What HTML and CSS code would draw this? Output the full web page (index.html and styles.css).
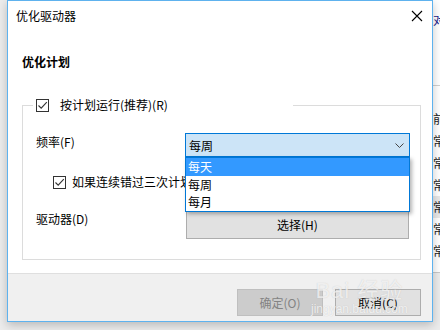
FILE: index.html
```html
<!DOCTYPE html>
<html lang="zh-CN">
  <head>
    <meta charset="UTF-8" />
    <title>优化驱动器</title>
    <link rel="stylesheet" href="styles.css">
  </head>
  <body>
    <div class="desk">
      <div class="dialog">
        <div class="titlebar">
          <span class="title">优化驱动器</span>
          <svg class="close" width="12" height="12" viewBox="0 0 12 12">
            <path d="M1 1L11 11M11 1L1 11" stroke="#000" stroke-width="1.1" fill="none" />
          </svg>
        </div>
        <div class="content">
          <h2 class="heading">优化计划</h2>
          <fieldset class="group">
            <legend class="legend">
              <span class="check">
                <svg width="11" height="11" viewBox="0 0 11 11"><path d="M1.5 5.5L4.2 8.2L9.8 2.2" stroke="#333" stroke-width="1.1" fill="none" /></svg>
              </span>
              <span>按计划运行(推荐)(R)</span>
            </legend>
            <div class="row freq">
              <span class="label">频率(F)</span>
              <div class="select">
                <span>每周</span>
                <svg class="chevron" width="9" height="5" viewBox="0 0 9 5"><path d="M0.5 0.5L4.5 4.5L8.5 0.5" stroke="#444" stroke-width="1" fill="none" /></svg>
                <ul class="options">
                  <li class="on">每天</li>
                  <li>每周</li>
                  <li>每月</li>
                </ul>
              </div>
            </div>
            <div class="row miss">
              <span class="check">
                <svg width="11" height="11" viewBox="0 0 11 11"><path d="M1.5 5.5L4.2 8.2L9.8 2.2" stroke="#333" stroke-width="1.1" fill="none" /></svg>
              </span>
              <span>如果连续错过三次计划运行，则增加优先级</span>
            </div>
            <div class="row drive">
              <span class="label">驱动器(D)</span>
              <button class="btn choose">选择(H)</button>
            </div>
          </fieldset>
        </div>
        <div class="footer">
          <button class="btn off">确定(O)</button>
          <button class="btn">取消(C)</button>
        </div>
        <div class="watermark">
          <span class="wm-logo">Bai 经验</span>
          <span class="wm-url">jingyan.baidu.com</span>
        </div>
      </div>
      <div class="behind">
        <div class="bh-head">对</div>
        <div class="bh-row first">前</div>
        <div class="bh-row">常</div>
        <div class="bh-row">常</div>
        <div class="bh-row">常</div>
        <div class="bh-row alt">常</div>
        <div class="bh-row">常</div>
        <div class="bh-row">常</div>
      </div>
    </div>
  </body>
</html>
```

FILE: styles.css
```css
* {
  box-sizing: border-box;
}
body {
  margin: 0;
  width: 440px;
  height: 330px;
  overflow: hidden;
  background-color: #ececec;
  font-family: "Noto Sans CJK SC", "Noto Sans", sans-serif;
  font-size: 12px;
  color: #000;
}
.desk {
  display: flex;
  padding-left: 7px;
  height: 330px;
}
.dialog {
  position: relative;
  z-index: 1;
  width: 426px;
  height: 322px;
  border: 1px solid #5eb2ee;
  background-color: #fff;
  display: flex;
  flex-direction: column;
  box-shadow: 0 3px 9px rgba(0, 0, 0, 0.22);
}
.titlebar {
  height: 31px;
  display: flex;
  align-items: center;
  justify-content: space-between;
  padding: 0 9px 0 8px;
}
.title {
  line-height: 16px;
  margin-top: -1px;
}
.close {
  display: block;
  margin-top: -2px;
}
.content {
  height: 241px;
  padding: 22px 11px 0 14px;
}
.heading {
  margin: 0;
  font-size: 12px;
  font-weight: bold;
  line-height: 16px;
}
.group {
  margin: 28px 0 0;
  padding: 0 0 20px 13px;
  border: 1px solid #dcdcdc;
  min-width: 0;
}
.legend {
  width: 260px;
  margin-left: -3px;
  padding: 0 0 0 3px;
  display: flex;
  align-items: center;
  gap: 11px;
  height: 14px;
  line-height: 14px;
}
.check {
  width: 13px;
  height: 13px;
  border: 1px solid #333;
  background-color: #fff;
  display: flex;
  align-items: center;
  justify-content: center;
  flex-shrink: 0;
}
.row {
  display: flex;
  align-items: flex-start;
}
.label {
  width: 149px;
  line-height: 18px;
}
.freq {
  margin-top: 21px;
}
.select {
  position: relative;
  width: 225px;
  height: 24px;
  border: 1px solid #0078d7;
  background-color: #cce4f7;
  display: flex;
  align-items: center;
  justify-content: space-between;
  padding: 0 5px 0 3px;
}
.chevron {
  display: block;
}
.options {
  position: absolute;
  left: -1px;
  top: 23px;
  width: 225px;
  margin: 0;
  padding: 0 0 1px;
  list-style: none;
  border: 1px solid #0078d7;
  background-color: #fff;
  box-shadow: 2px 2px 4px rgba(0, 0, 0, 0.3);
}
.options li {
  height: 17px;
  line-height: 17px;
  padding-left: 2px;
}
.options li.on {
  height: 18px;
  background-color: #3399ff;
  color: #fff;
}
.miss {
  margin-top: 18px;
  padding-left: 17px;
  gap: 6px;
  align-items: center;
  line-height: 14px;
}
.drive {
  margin-top: 21px;
}
.btn {
  font-family: inherit;
  font-size: 12px;
  color: #000;
  background-color: #e1e1e1;
  border: 1px solid #adadad;
  padding: 0;
}
.choose {
  width: 223px;
  height: 29px;
  margin-left: 1px;
}
.footer {
  height: 48px;
  border-top: 1px solid #dfdfdf;
  background-color: #f0f0f0;
  display: flex;
  justify-content: flex-end;
  align-items: flex-start;
  gap: 12px;
  padding: 15px 11px 0 0;
}
.footer .btn {
  width: 86px;
  height: 27px;
}
.btn.off {
  background-color: #cccccc;
  border-color: #bfbfbf;
  color: #838383;
}
.watermark {
  position: absolute;
  left: 303px;
  top: 278px;
  display: flex;
  flex-direction: column;
  align-items: center;
  pointer-events: none;
}
.wm-logo {
  font-family: "Liberation Sans", "Noto Sans CJK SC", sans-serif;
  font-size: 22px;
  line-height: 24px;
  color: rgba(255, 255, 255, 0.7);
  text-shadow: 0 0 1px rgba(140, 140, 140, 0.4);
  letter-spacing: 1px;
}
.wm-url {
  font-family: "Liberation Sans", sans-serif;
  font-size: 12px;
  line-height: 12px;
  color: rgba(255, 255, 255, 0.75);
  text-shadow: 0 0 1px rgba(140, 140, 140, 0.4);
}
.behind {
  flex: 1;
  overflow: hidden;
  height: 273px;
  background-color: #fff;
  border-bottom: 1px solid #c8c8c8;
  white-space: nowrap;
}
.bh-head {
  height: 86px;
  padding-top: 12px;
  line-height: 16px;
  border-bottom: 1px solid #d0d0d0;
  color: #1a1a8a;
}
.bh-row {
  height: 22px;
  line-height: 22px;
  color: #222;
}
.bh-row.first {
  margin-top: 22px;
}
.bh-row.alt {
  background-color: #e8e8e8;
}
```
